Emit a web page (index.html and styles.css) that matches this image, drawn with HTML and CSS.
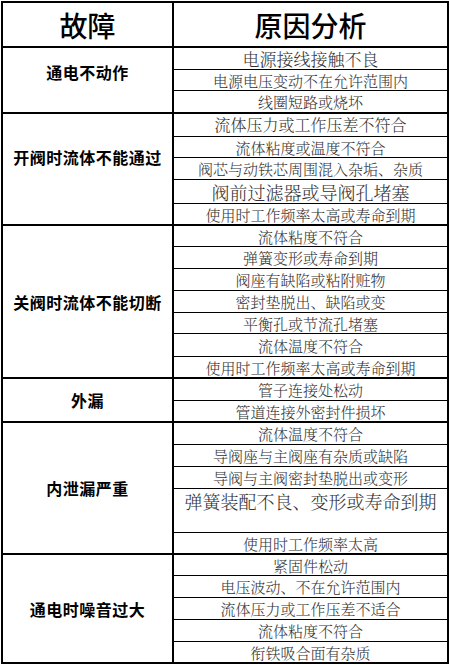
FILE: index.html
```html
<!DOCTYPE html>
<html lang="zh-CN">
<head>
<meta charset="utf-8">
<title>故障 原因分析</title>
<link rel="stylesheet" href="styles.css">
</head>
<body>
<div class="table">
  <div class="head">
    <div class="h-left">故障</div>
    <div class="h-right">原因分析</div>
  </div>

  <div class="sec">
    <div class="fault up8">通电不动作</div>
    <div class="causes">
      <div class="row h22 f17">电源接线接触不良</div>
      <div class="row h21">电源电压变动不在允许范围内</div>
      <div class="row h21 last">线圈短路或烧坏</div>
    </div>
  </div>

  <div class="sec">
    <div class="fault up12">开阀时流体不能通过</div>
    <div class="causes">
      <div class="row h23 f16">流体压力或工作压差不符合</div>
      <div class="row h21">流体粘度或温度不符合</div>
      <div class="row h22">阀芯与动铁芯周围混入杂垢、杂质</div>
      <div class="row h24 f18">阀前过滤器或导阀孔堵塞</div>
      <div class="row h20 last">使用时工作频率太高或寿命到期</div>
    </div>
  </div>

  <div class="sec">
    <div class="fault">关阀时流体不能切断</div>
    <div class="causes">
      <div class="row h21">流体粘度不符合</div>
      <div class="row h22">弹簧变形或寿命到期</div>
      <div class="row h22">阀座有缺陷或粘附赃物</div>
      <div class="row h22">密封垫脱出、缺陷或变</div>
      <div class="row h21">平衡孔或节流孔堵塞</div>
      <div class="row h23">流体温度不符合</div>
      <div class="row h20 last">使用时工作频率太高或寿命到期</div>
    </div>
  </div>

  <div class="sec">
    <div class="fault">外漏</div>
    <div class="causes">
      <div class="row h22">管子连接处松动</div>
      <div class="row h20 last">管道连接外密封件损坏</div>
    </div>
  </div>

  <div class="sec">
    <div class="fault">内泄漏严重</div>
    <div class="causes">
      <div class="row h22">流体温度不符合</div>
      <div class="row h22">导阀座与主阀座有杂质或缺陷</div>
      <div class="row h22">导阀与主阀密封垫脱出或变形</div>
      <div class="row h44 f18 top">弹簧装配不良、变形或寿命到期</div>
      <div class="row h20 last">使用时工作频率太高</div>
    </div>
  </div>

  <div class="sec final">
    <div class="fault">通电时噪音过大</div>
    <div class="causes">
      <div class="row h21">紧固件松动</div>
      <div class="row h22">电压波动、不在允许范围内</div>
      <div class="row h22">流体压力或工作压差不适合</div>
      <div class="row h22">流体粘度不符合</div>
      <div class="row h20 last">衔铁吸合面有杂质</div>
    </div>
  </div>
</div>
</body>
</html>
```

FILE: styles.css
```css
* {
  box-sizing: border-box;
}

html, body {
  margin: 0;
  padding: 0;
  background: #ffffff;
}

.table {
  width: 448px;
  margin: 1px 0 0 1px;
  border: 2px solid #000;
  display: flex;
  flex-direction: column;
}

.head {
  display: flex;
  height: 45px;
  border-bottom: 2px solid #000;
  font-family: "Noto Sans CJK SC", sans-serif;
  font-weight: 500;
  font-size: 28px;
  color: #000;
}

.h-left {
  width: 171px;
  border-right: 2px solid #000;
  display: flex;
  align-items: center;
  justify-content: center;
}

.h-right {
  flex: 1;
  display: flex;
  align-items: center;
  justify-content: center;
}

.sec {
  display: flex;
  border-bottom: 2px solid #000;
}

.sec.final {
  border-bottom: none;
}

.fault {
  width: 171px;
  border-right: 2px solid #000;
  display: flex;
  align-items: center;
  justify-content: center;
  font-family: "Noto Sans CJK SC", sans-serif;
  font-weight: 700;
  font-size: 16px;
  letter-spacing: 0.5px;
  color: #000;
}

.fault.up8 {
  padding-bottom: 16px;
}

.fault.up12 {
  padding-bottom: 24px;
}

.causes {
  flex: 1;
  display: flex;
  flex-direction: column;
}

.row {
  display: flex;
  align-items: center;
  justify-content: center;
  border-bottom: 1px solid #000;
  font-family: "Noto Serif CJK SC", "Noto Sans CJK SC", serif;
  font-weight: 300;
  font-size: 15px;
  line-height: 1;
  color: #333;
  white-space: nowrap;
}

.row.last {
  border-bottom: none;
}

.row.top {
  align-items: flex-start;
  padding-top: 3px;
}

.h20 { height: 20px; }
.h21 { height: 21px; }
.h22 { height: 22px; }
.h23 { height: 23px; }
.h24 { height: 24px; }
.h44 { height: 44px; }

.f16 { font-size: 16px; }
.f17 { font-size: 17px; }
.f18 { font-size: 18px; }
```
